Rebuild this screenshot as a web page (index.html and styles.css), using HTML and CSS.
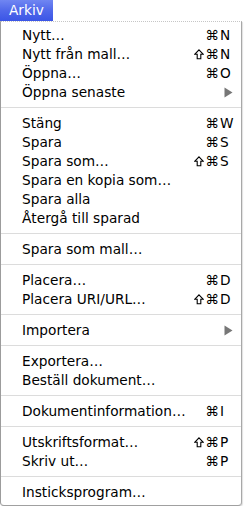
FILE: index.html
```html
<!DOCTYPE html>
<html>
<head>
<meta charset="utf-8">
<link rel="stylesheet" href="styles.css">
</head>
<body>
<div class="title">Arkiv</div>
<div class="menu">
  <div class="item"><span class="label">Nytt…</span><span class="mod">⌘</span><span class="key">N</span></div>
  <div class="item"><span class="label">Nytt från mall…</span><span class="mod"><svg class="shift" width="10" height="11" viewBox="0 0 10 11"><path d="M5 0.8 L9.3 5.3 L6.8 5.3 L6.8 9.8 L3.2 9.8 L3.2 5.3 L0.7 5.3 Z" fill="none" stroke="#000" stroke-width="1.1" stroke-linejoin="miter"/></svg>⌘</span><span class="key">N</span></div>
  <div class="item"><span class="label">Öppna…</span><span class="mod">⌘</span><span class="key">O</span></div>
  <div class="item"><span class="label">Öppna senaste</span><span class="mod"></span><span class="key"><svg class="arrow" width="9" height="11" viewBox="0 0 9 11"><polygon points="0.5,0.5 8.5,5.5 0.5,10.5" fill="#777"/></svg></span></div>
  <div class="sep"></div>
  <div class="item"><span class="label">Stäng</span><span class="mod">⌘</span><span class="key">W</span></div>
  <div class="item"><span class="label">Spara</span><span class="mod">⌘</span><span class="key">S</span></div>
  <div class="item"><span class="label">Spara som…</span><span class="mod"><svg class="shift" width="10" height="11" viewBox="0 0 10 11"><path d="M5 0.8 L9.3 5.3 L6.8 5.3 L6.8 9.8 L3.2 9.8 L3.2 5.3 L0.7 5.3 Z" fill="none" stroke="#000" stroke-width="1.1" stroke-linejoin="miter"/></svg>⌘</span><span class="key">S</span></div>
  <div class="item"><span class="label">Spara en kopia som…</span></div>
  <div class="item"><span class="label">Spara alla</span></div>
  <div class="item"><span class="label">Återgå till sparad</span></div>
  <div class="sep"></div>
  <div class="item"><span class="label">Spara som mall…</span></div>
  <div class="sep"></div>
  <div class="item"><span class="label">Placera…</span><span class="mod">⌘</span><span class="key">D</span></div>
  <div class="item"><span class="label">Placera URI/URL…</span><span class="mod"><svg class="shift" width="10" height="11" viewBox="0 0 10 11"><path d="M5 0.8 L9.3 5.3 L6.8 5.3 L6.8 9.8 L3.2 9.8 L3.2 5.3 L0.7 5.3 Z" fill="none" stroke="#000" stroke-width="1.1" stroke-linejoin="miter"/></svg>⌘</span><span class="key">D</span></div>
  <div class="sep"></div>
  <div class="item"><span class="label">Importera</span><span class="mod"></span><span class="key"><svg class="arrow" width="9" height="11" viewBox="0 0 9 11"><polygon points="0.5,0.5 8.5,5.5 0.5,10.5" fill="#777"/></svg></span></div>
  <div class="sep"></div>
  <div class="item"><span class="label">Exportera…</span></div>
  <div class="item"><span class="label">Beställ dokument…</span></div>
  <div class="sep"></div>
  <div class="item"><span class="label">Dokumentinformation…</span><span class="mod">⌘</span><span class="key">I</span></div>
  <div class="sep"></div>
  <div class="item"><span class="label">Utskriftsformat…</span><span class="mod"><svg class="shift" width="10" height="11" viewBox="0 0 10 11"><path d="M5 0.8 L9.3 5.3 L6.8 5.3 L6.8 9.8 L3.2 9.8 L3.2 5.3 L0.7 5.3 Z" fill="none" stroke="#000" stroke-width="1.1" stroke-linejoin="miter"/></svg>⌘</span><span class="key">P</span></div>
  <div class="item"><span class="label">Skriv ut…</span><span class="mod">⌘</span><span class="key">P</span></div>
  <div class="sep"></div>
  <div class="item"><span class="label">Insticksprogram…</span></div>
</div>
</body>
</html>
```
FILE: styles.css
```css
html, body {
  margin: 0;
  padding: 0;
  background: #ffffff;
}
body {
  font-family: "DejaVu Sans", "Liberation Sans", sans-serif;
  font-size: 13.7px;
  color: #000;
}
.title {
  width: 44px;
  height: 21px;
  line-height: 21px;
  padding-left: 9px;
  color: #fff;
  background: linear-gradient(to bottom, #7086f2 0%, #5068ea 50%, #3a55e6 100%);
}
.menu {
  width: 240px;
  border-left: 1px solid #9c9c9c;
  border-right: 1px solid #a8a8a8;
  border-bottom: 1px solid #a0a0a0;
  border-top: 1px dotted #c6c6c6;
  border-radius: 0 0 4px 4px;
  padding: 3px 0 4px 0;
  background: #fff;
  box-shadow: 1px 1px 1px rgba(0,0,0,0.12);
}
.item {
  display: grid;
  grid-template-columns: 1fr auto 13px;
  align-items: center;
  height: 19px;
  line-height: 19px;
  padding: 0 8px 0 21px;
  white-space: nowrap;
}
.label {
  padding-top: 1px;
}
.mod {
  display: flex;
  align-items: center;
  justify-content: flex-end;
  height: 19px;
  padding-right: 1px;
  padding-top: 1px;
}
.shift {
  display: block;
  margin-right: 1px;
  margin-top: -1px;
}
.key {
  text-align: left;
  padding-top: 1px;
  display: flex;
  align-items: center;
  height: 19px;
}
.arrow {
  display: block;
  margin-left: 4px;
  margin-top: -1px;
}
.sep {
  height: 12px;
  display: flex;
  align-items: center;
}
.sep::before {
  content: "";
  display: block;
  width: 100%;
  height: 1px;
  background: #dcdcdc;
}
```
